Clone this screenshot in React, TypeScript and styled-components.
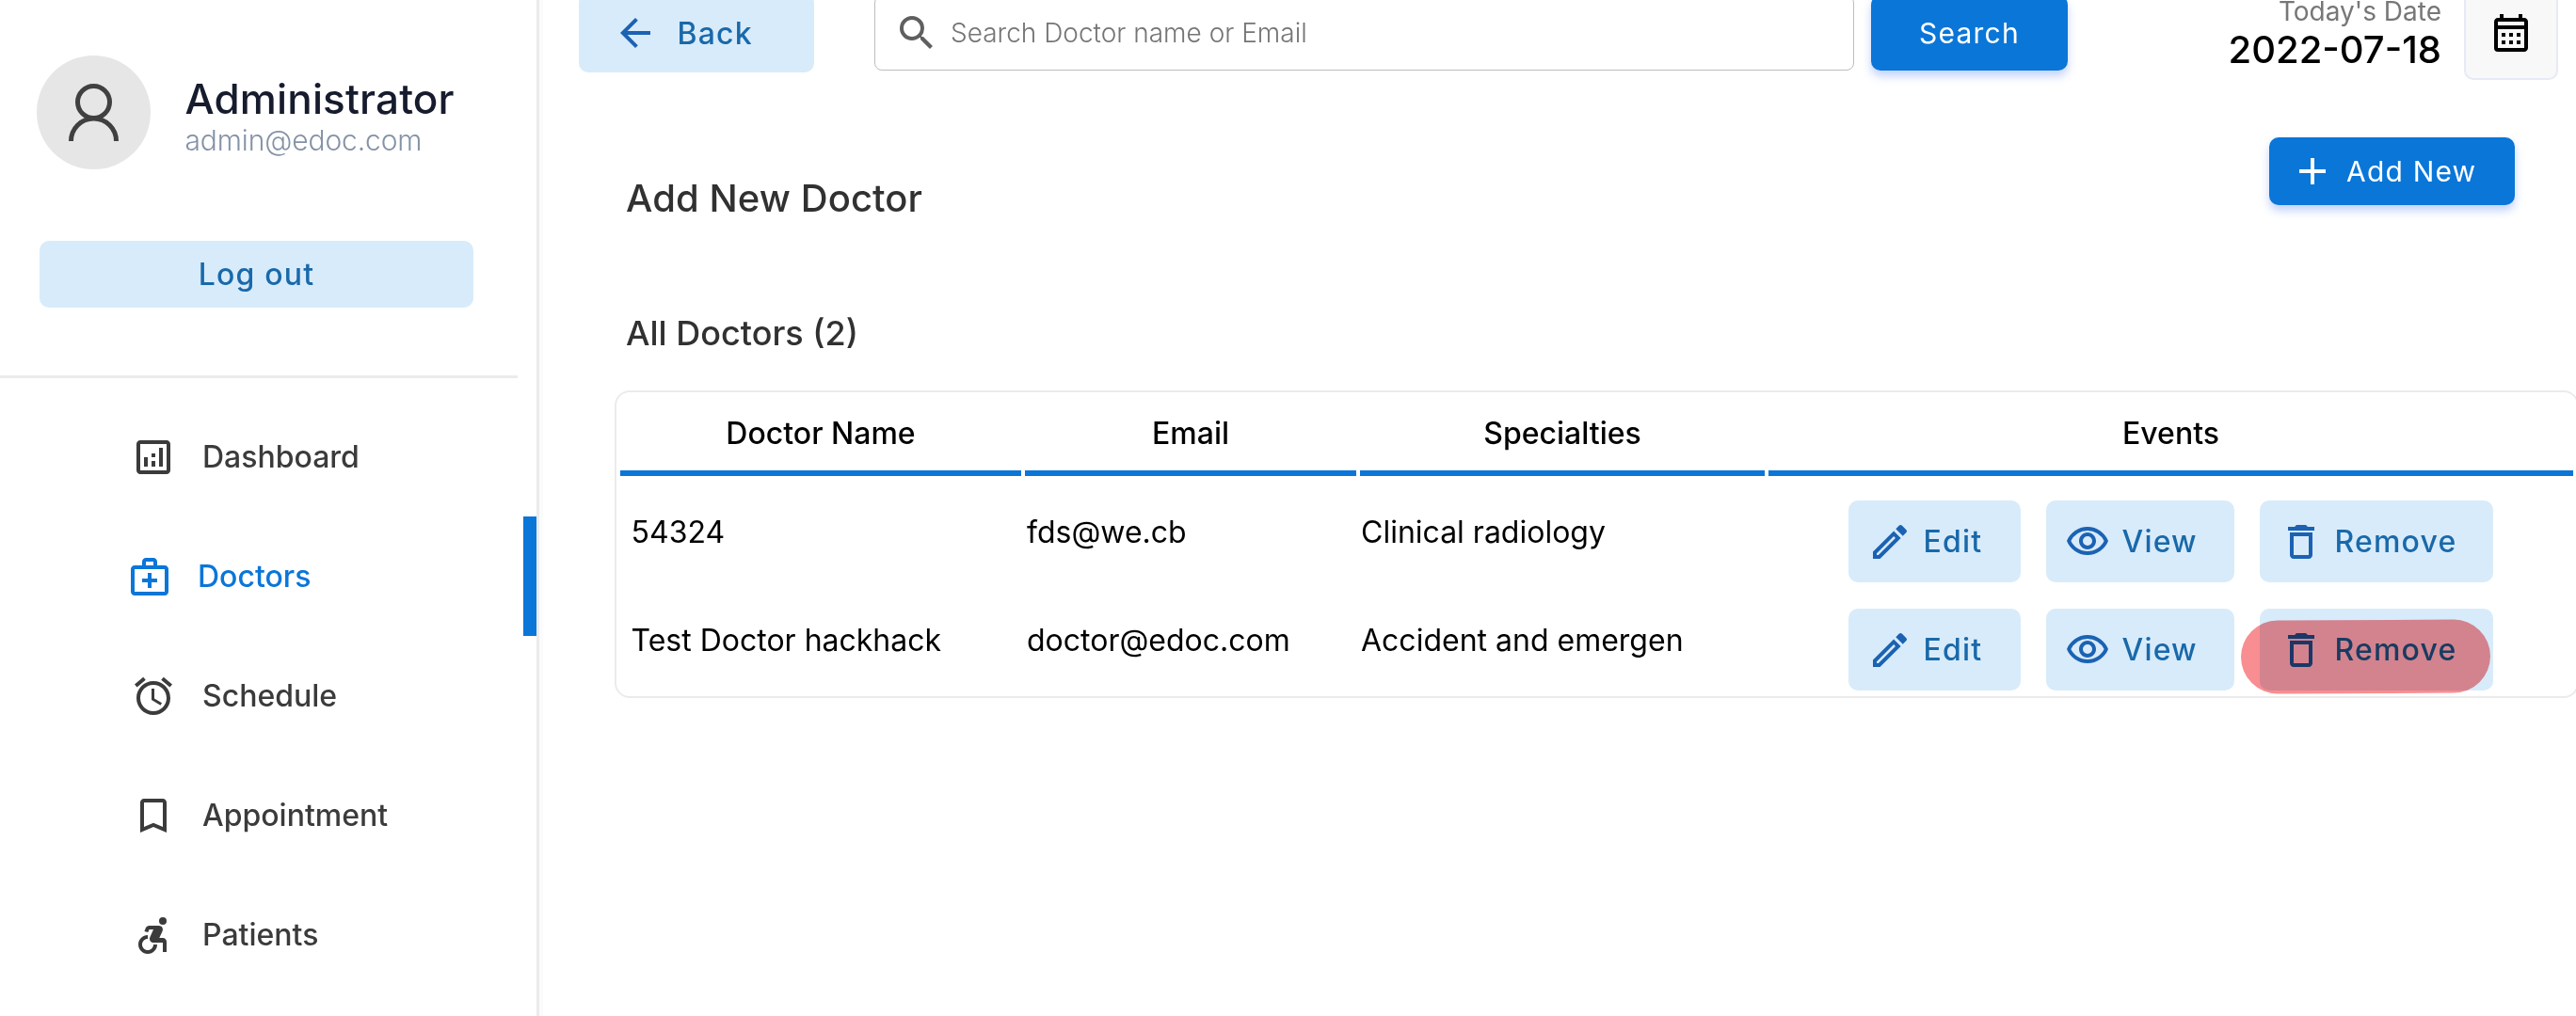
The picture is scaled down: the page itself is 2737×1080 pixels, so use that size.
import React from 'react';
import styled, { createGlobalStyle, css } from 'styled-components';
import type { IconType } from 'react-icons';
import {
  MdAccessibleForward,
  MdAdd,
  MdAlarm,
  MdArrowBack,
  MdDeleteOutline,
  MdOutlineAnalytics,
  MdOutlineBookmarkBorder,
  MdOutlineCalendarMonth,
  MdOutlineEdit,
  MdOutlineMedicalServices,
  MdOutlineVisibility,
  MdSearch,
} from 'react-icons/md';

const primary = '#0a76d8';
const softBg = '#d8ebfa';
const softText = '#1969aa';
const softIcon = '#1b62b3';
const line = '#ebebeb';

const GlobalStyle = createGlobalStyle`
  *, *::before, *::after { box-sizing: border-box; }
  html, body { margin: 0; background: #fff; overflow: hidden; }
  body { font-family: Inter, 'Liberation Sans', sans-serif; color: #000; }
  button, input { font: inherit; margin: 0; }
  button { color: inherit; }
  svg { flex: none; display: block; }
`;

const Page = styled.div`
  display: flex;
  height: 1080px;
  overflow: hidden;
`;

/* Sidebar */

const Sidebar = styled.aside`
  flex: none;
  width: 573px;
  border-right: 3px solid ${line};
  box-shadow: 4px 0 0 #fbfbfb;
`;

const Profile = styled.div`
  display: flex;
  padding: 59px 0 0 39px;
`;

const Avatar = styled.div`
  width: 121px;
  height: 121px;
  border-radius: 50%;
  background: #e6e6e6;
`;

const ProfileText = styled.div`
  padding: 21px 0 0 36.5px;
`;

const ProfileName = styled.div`
  font-size: 44px;
  font-weight: 500;
  line-height: 50px;
  letter-spacing: 0.14px;
  color: #161c2d;
`;

const ProfileEmail = styled.div`
  font-size: 30px;
  font-weight: 300;
  line-height: 39px;
  letter-spacing: -0.13px;
  color: #8492a6;
`;

const ButtonBase = styled.button`
  display: flex;
  align-items: center;
  border: 0;
  border-radius: 10px;
  padding: 0;
  letter-spacing: 1.2px;
  white-space: nowrap;
`;

const SoftButton = styled(ButtonBase)`
  background: ${softBg};
  color: ${softText};
  font-size: 32px;
  font-weight: 500;

  svg {
    color: ${softIcon};
  }
`;

const PrimaryButton = styled(ButtonBase)`
  background: ${primary};
  color: #fff;
  font-size: 30px;
  font-weight: 400;
  box-shadow: 0 6px 10px 0 rgba(57, 108, 240, 0.3);
`;

const LogoutButton = styled(SoftButton)`
  justify-content: center;
  width: 461px;
  height: 71px;
  margin: 76px 0 0 42px;
`;

const Divider = styled.hr`
  width: 550px;
  height: 3px;
  margin: 72px 0 20px;
  border: 0;
  background: ${line};
`;

const NavItem = styled.a<{ $active?: boolean }>`
  display: flex;
  align-items: flex-start;
  gap: 28px;
  height: 127px;
  padding: 40px 0 0 139px;
  font-size: 32px;
  font-weight: 500;
  line-height: 47px;
  color: #3b3b3b;
  ${p =>
    p.$active &&
    css`
      gap: 27px;
      padding-left: 135px;
      color: ${primary};
      border-right: 14px solid ${primary};
    `}
`;

/* Header */

const Main = styled.main`
  flex: 1;
  min-width: 0;
  overflow: hidden;
`;

const Header = styled.header`
  display: flex;
  align-items: center;
  height: 100px;
  margin-top: -15px;
  padding: 0 19px 0 42px;
`;

const BackButton = styled(SoftButton)`
  width: 250px;
  height: 84px;
  padding-left: 36px;
  gap: 20.5px;
`;

const SearchField = styled.label`
  display: flex;
  align-items: center;
  gap: 12px;
  width: 1041px;
  height: 80px;
  margin: 0 18px 0 64px;
  padding-left: 20px;
  border: 1px solid #bdbdbd;
  border-radius: 8px;
  color: #5f5f5f;
`;

const SearchInput = styled.input`
  flex: 1;
  min-width: 0;
  padding: 0;
  border: 0;
  outline: 0;
  background: transparent;
  font-size: 28px;
  font-weight: 300;

  &::placeholder {
    color: #757575;
    opacity: 1;
  }
`;

const SearchButton = styled(PrimaryButton)`
  justify-content: center;
  width: 209px;
  height: 80px;
`;

const Today = styled.div`
  margin: 2px 24px 0 auto;
  text-align: right;
`;

const TodayLabel = styled.div`
  font-size: 28px;
  line-height: 34px;
  color: #777;
`;

const TodayValue = styled.div`
  font-size: 40px;
  font-weight: 500;
  line-height: 48px;
`;

const CalendarButton = styled.button`
  display: flex;
  align-items: center;
  justify-content: center;
  width: 100px;
  height: 100px;
  padding: 0;
  border: 2px solid #e6eaf6;
  border-radius: 10px;
  background: #f8f8f8;
`;

/* Content */

const TitleRow = styled.div`
  display: flex;
  align-items: flex-start;
  justify-content: space-between;
  height: 90px;
  margin-top: 61px;
  padding: 0 65px 0 92px;
`;

const Title = styled.h1`
  margin: 0;
  padding-top: 40px;
  font-size: 40px;
  font-weight: 500;
  line-height: 50px;
  letter-spacing: 0.08px;
  color: #313131;
`;

const AddButton = styled(PrimaryButton)`
  gap: 12px;
  width: 261px;
  height: 72px;
  padding-left: 22px;
`;

const Subtitle = styled.h2`
  margin: 96px 0 39px 92px;
  font-size: 36px;
  font-weight: 500;
  line-height: 44px;
  color: #313131;
`;

const Table = styled.section`
  display: grid;
  grid-template-columns: 426px 352px 430px 855px;
  grid-template-rows: 85px;
  grid-auto-rows: 111px;
  gap: 4px;
  width: 2087px;
  margin-left: 80px;
  padding: 4px;
  border: 2px solid ${line};
  border-radius: 16px;
  font-size: 32px;
`;

const HeadCell = styled.div`
  padding-top: 20px;
  border-bottom: 6px solid ${primary};
  font-weight: 500;
  line-height: 40px;
  text-align: center;
`;

const Cell = styled.div<{ $indent: number }>`
  display: flex;
  align-items: center;
  padding-left: ${p => p.$indent}px;
  white-space: nowrap;
`;

const Actions = styled.div`
  display: flex;
  justify-content: center;
  gap: 27px;
  padding-top: 22px;
`;

const ActionButton = styled(SoftButton)<{ $width: number; $gap?: number }>`
  position: relative;
  width: ${p => p.$width}px;
  height: 87px;
  padding-left: 20px;
  gap: ${p => p.$gap ?? 11.5}px;
`;

const Highlight = styled.span`
  position: absolute;
  top: 11.5px;
  left: -20px;
  width: 265px;
  height: 78px;
  border-radius: 39px;
  background: #f88e91;
  mix-blend-mode: multiply;
  transform: rotate(-0.25deg);
  pointer-events: none;
`;

const nav: { label: string; icon: IconType; active?: boolean }[] = [
  { label: 'Dashboard', icon: MdOutlineAnalytics },
  { label: 'Doctors', icon: MdOutlineMedicalServices, active: true },
  { label: 'Schedule', icon: MdAlarm },
  { label: 'Appointment', icon: MdOutlineBookmarkBorder },
  { label: 'Patients', icon: MdAccessibleForward },
];

const doctors = [
  { name: '54324', email: 'fds@we.cb', specialty: 'Clinical radiology', marked: false },
  { name: 'Test Doctor hackhack', email: 'doctor@edoc.com', specialty: 'Accident and emergen', marked: true },
];

export default function App() {
  return (
    <Page>
      <GlobalStyle />
      <Sidebar>
        <Profile>
          <Avatar>
            <svg width="121" height="121" viewBox="0 0 121 121" fill="none" stroke="#404040" strokeWidth="5">
              <circle cx="60.5" cy="49.5" r="17" />
              <path d="M36.5 91a24 24 0 0 1 48 0" />
            </svg>
          </Avatar>
          <ProfileText>
            <ProfileName>Administrator</ProfileName>
            <ProfileEmail>admin@edoc.com</ProfileEmail>
          </ProfileText>
        </Profile>
        <LogoutButton>Log out</LogoutButton>
        <Divider />
        <nav>
          {nav.map(({ label, icon: Icon, active }) => (
            <NavItem key={label} $active={active}>
              <Icon size={48} />
              {label}
            </NavItem>
          ))}
        </nav>
      </Sidebar>
      <Main>
        <Header>
          <BackButton>
            <MdArrowBack size={48} />
            Back
          </BackButton>
          <SearchField>
            <MdSearch size={48} />
            <SearchInput placeholder="Search Doctor name or Email" />
          </SearchField>
          <SearchButton>Search</SearchButton>
          <Today>
            <TodayLabel>Today's Date</TodayLabel>
            <TodayValue>2022-07-18</TodayValue>
          </Today>
          <CalendarButton>
            <MdOutlineCalendarMonth size={48} />
          </CalendarButton>
        </Header>
        <TitleRow>
          <Title>Add New Doctor</Title>
          <AddButton>
            <MdAdd size={48} />
            Add New
          </AddButton>
        </TitleRow>
        <Subtitle>All Doctors (2)</Subtitle>
        <Table>
          <HeadCell>Doctor Name</HeadCell>
          <HeadCell>Email</HeadCell>
          <HeadCell>Specialties</HeadCell>
          <HeadCell>Events</HeadCell>
          {doctors.map(d => (
            <React.Fragment key={d.email}>
              <Cell $indent={11.5}>{d.name}</Cell>
              <Cell $indent={2}>{d.email}</Cell>
              <Cell $indent={1}>{d.specialty}</Cell>
              <Actions>
                <ActionButton $width={183}>
                  <MdOutlineEdit size={48} />
                  Edit
                </ActionButton>
                <ActionButton $width={200} $gap={12.5}>
                  <MdOutlineVisibility size={48} />
                  View
                </ActionButton>
                <ActionButton $width={248}>
                  <MdDeleteOutline size={48} />
                  Remove
                  {d.marked && <Highlight />}
                </ActionButton>
              </Actions>
            </React.Fragment>
          ))}
        </Table>
      </Main>
    </Page>
  );
}
